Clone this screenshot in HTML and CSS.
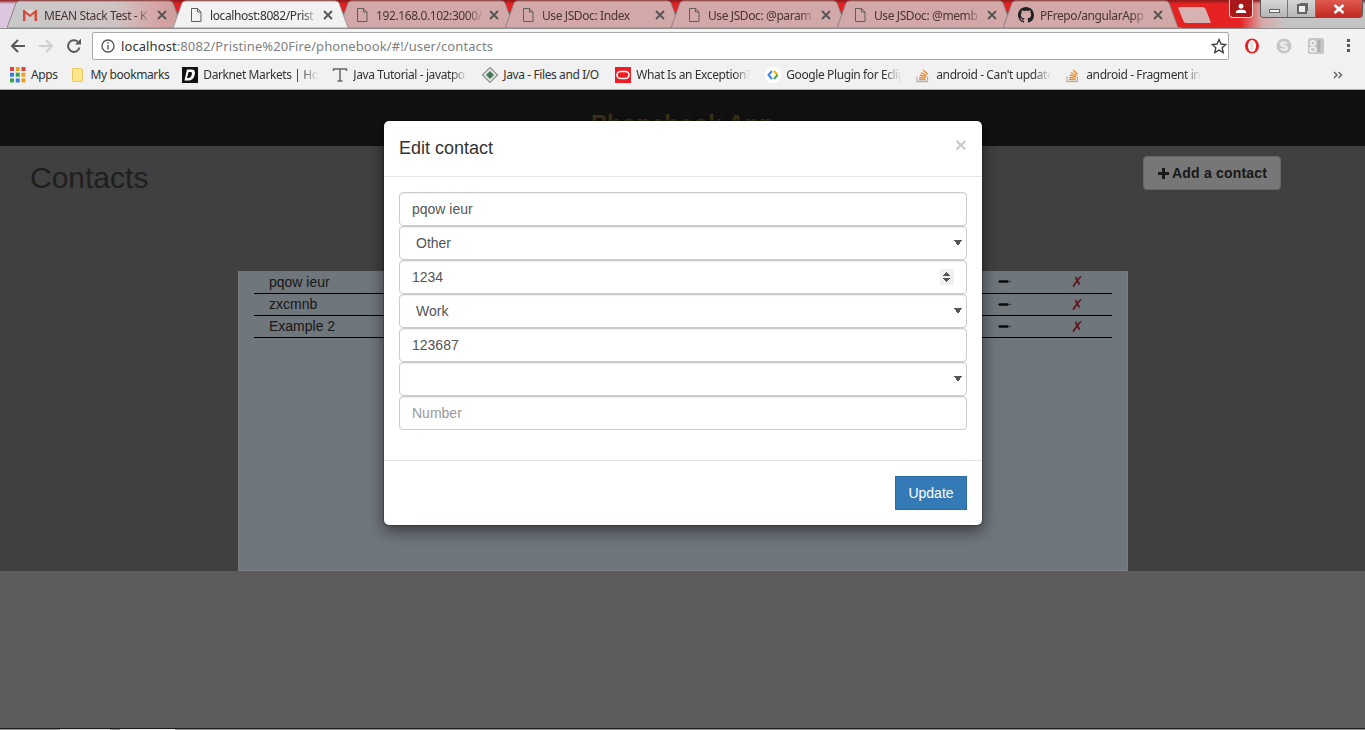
FILE: index.html
```html
<!DOCTYPE html>
<html lang="en">
<head>
  <meta charset="UTF-8">
  <title>Phonebook App</title>
  <link rel="stylesheet" href="styles.css">
</head>
<body>
  <svg class="sprite" width="0" height="0">
    <defs>
      <linearGradient id="first-tab-fill" x1="0" x2="1" y1="0" y2="0">
        <stop offset="0" stop-color="#c9c9c9"/>
        <stop offset=".6" stop-color="#cfc4c4"/>
        <stop offset=".85" stop-color="#d6a4a4"/>
        <stop offset="1" stop-color="#c99a9a"/>
      </linearGradient>
    </defs>
    <symbol id="tab-shape" viewBox="0 0 178 28" preserveAspectRatio="none">
      <path d="M0 28 L9 3 Q10 1 13 1 L162 1 Q165 1 166 3 L175 27.5 L178 28 Z"/>
    </symbol>
    <symbol id="page" viewBox="0 0 16 16">
      <path d="M3.500 1.500h6l3.500 3.500v9.500h-9.500z M9.500 1.500v3.500h3.500" fill="none" stroke="#5f5f5f" stroke-width="1"/>
    </symbol>
    <symbol id="close" viewBox="0 0 10 10">
      <path d="M1 1l8 8M9 1l-8 8" fill="none" stroke="#555" stroke-width="1.800"/>
    </symbol>
    <symbol id="so" viewBox="0 0 16 16">
      <path d="M2 9.500v5h10.500v-5" fill="none" stroke="#b9b3a9" stroke-width="1.300"/>
      <path d="M4 12.500h6.500" stroke="#c89a5a" stroke-width="1.400"/>
      <path d="M4.200 10.500l6.500 .6M4.800 8l6.300 1.700M6 5.500l5.600 3M8 3l4.600 4.300" fill="none" stroke="#f08a24" stroke-width="1.300"/>
    </symbol>
    <symbol id="pencil" viewBox="0 0 14 5">
      <path d="M0 2.500L1.500 1.200h8.500v2.600H1.500z" fill="#161616"/>
      <path d="M10 1.600L14 2.500l-4 .9z" fill="#6a6a6a"/>
    </symbol>
  </svg>

  <div class="tabstrip">
    <div class="tab tab-first">
      <svg class="tab-bg"><use href="#tab-shape"/></svg>
      <svg class="ico" viewBox="0 0 16 16"><path d="M1 3h14v11h-2.500V6.500L8 10 3.500 6.500V14H1z" fill="#d9d9d9"/><path d="M1 14V3h1.500L8 7.500 13.500 3H15v11h-2.500V6.500L8 10 3.500 6.500V14z" fill="#d5493c"/></svg>
      <span class="tab-label">MEAN Stack Test - K</span>
      <svg class="tab-x"><use href="#close"/></svg>
    </div>
    <div class="tab tab-active">
      <svg class="tab-bg"><use href="#tab-shape"/></svg>
      <svg class="ico"><use href="#page"/></svg>
      <span class="tab-label">localhost:8082/Prist</span>
      <svg class="tab-x"><use href="#close"/></svg>
    </div>
    <div class="tab">
      <svg class="tab-bg"><use href="#tab-shape"/></svg>
      <svg class="ico"><use href="#page"/></svg>
      <span class="tab-label">192.168.0.102:3000/</span>
      <svg class="tab-x"><use href="#close"/></svg>
    </div>
    <div class="tab">
      <svg class="tab-bg"><use href="#tab-shape"/></svg>
      <svg class="ico"><use href="#page"/></svg>
      <span class="tab-label">Use JSDoc: Index</span>
      <svg class="tab-x"><use href="#close"/></svg>
    </div>
    <div class="tab">
      <svg class="tab-bg"><use href="#tab-shape"/></svg>
      <svg class="ico"><use href="#page"/></svg>
      <span class="tab-label">Use JSDoc: @param</span>
      <svg class="tab-x"><use href="#close"/></svg>
    </div>
    <div class="tab">
      <svg class="tab-bg"><use href="#tab-shape"/></svg>
      <svg class="ico"><use href="#page"/></svg>
      <span class="tab-label">Use JSDoc: @memb</span>
      <svg class="tab-x"><use href="#close"/></svg>
    </div>
    <div class="tab">
      <svg class="tab-bg"><use href="#tab-shape"/></svg>
      <svg class="ico" viewBox="0 0 16 16"><path fill="#222" d="M8 0C3.580 0 0 3.580 0 8c0 3.540 2.290 6.530 5.470 7.590.4.070.55-.17.55-.38 0-.19-.01-.82-.01-1.490-2.010.37-2.530-.49-2.690-.94-.09-.23-.48-.94-.82-1.130-.28-.15-.68-.52-.01-.53.63-.01 1.080.58 1.230.82.72 1.210 1.870.87 2.330.66.070-.52.28-.87.51-1.070-1.780-.2-3.640-.89-3.640-3.950 0-.87.31-1.590.82-2.150-.08-.2-.36-1.020.08-2.120 0 0 .67-.21 2.200.82.64-.18 1.320-.27 2-.27s1.360.09 2 .27c1.530-1.040 2.200-.82 2.200-.82.44 1.100.16 1.920.08 2.120.51.56.82 1.270.82 2.150 0 3.070-1.870 3.750-3.650 3.950.29.25.54.73.54 1.480 0 1.070-.01 1.930-.01 2.200 0 .21.15.46.55.38A8.013 8.013 0 0 0 16 8c0-4.420-3.580-8-8-8z"/></svg>
      <span class="tab-label">PFrepo/angularApp</span>
      <svg class="tab-x"><use href="#close"/></svg>
    </div>
    <div class="newtab"></div>
    <div class="profile">
      <svg viewBox="0 0 16 12" width="14" height="11"><circle cx="8" cy="3.500" r="2.800" fill="#fff"/><path d="M2 11c0-3 3-3.500 6-3.500s6 .5 6 3.500z" fill="#fff"/></svg>
    </div>
    <div class="winbtns">
      <div class="winbtn win-first"><span class="win-min"></span></div>
      <div class="winbtn"><span class="win-max"></span></div>
      <div class="winbtn win-close">
        <svg viewBox="0 0 12 10" width="12" height="10"><path d="M1.500 1l9 8M10.500 1l-9 8" stroke="#fff" stroke-width="2.600" fill="none"/></svg>
      </div>
    </div>
  </div>

  <div class="toolbar">
    <svg class="navbtn" viewBox="0 0 16 16"><path d="M15 8H2.500M8 2L2 8l6 6" fill="none" stroke="#5a5a5a" stroke-width="2"/></svg>
    <svg class="navbtn" viewBox="0 0 16 16"><path d="M1 8h12.500M8 2l6 6-6 6" fill="none" stroke="#cfcfcf" stroke-width="2"/></svg>
    <svg class="navbtn" viewBox="0 0 16 16"><path d="M13.500 9.500A5.800 5.800 0 1 1 12 4" fill="none" stroke="#5a5a5a" stroke-width="2"/><path d="M9 6.500h6v-6z" fill="#5a5a5a"/></svg>
    <div class="omnibox">
      <svg class="info" viewBox="0 0 14 14"><circle cx="7" cy="7" r="6" fill="none" stroke="#555" stroke-width="1.300"/><path d="M7 6v4.500M7 3.300v1.500" stroke="#555" stroke-width="1.400"/></svg>
      <span class="url"><span class="url-host">localhost</span>:8082/Pristine%20Fire/phonebook/#!/user/contacts</span>
      <svg class="star" viewBox="0 0 16 16"><path d="M8 1.500l2 4.500 4.800.5-3.600 3.200 1 4.800L8 12.100l-4.200 2.400 1-4.800L1.200 6.500 6 6z" fill="none" stroke="#444" stroke-width="1.400"/></svg>
    </div>
    <div class="extensions">
      <svg class="ext" viewBox="0 0 16 16"><ellipse cx="8" cy="8" rx="7" ry="7.500" fill="#e8202a"/><ellipse cx="8" cy="8" rx="4" ry="6" fill="#fff"/><ellipse cx="8" cy="8" rx="1.800" ry="5" fill="#e3e3e3"/></svg>
      <svg class="ext" viewBox="0 0 16 16"><circle cx="8" cy="8" r="7.500" fill="#c6c6c6"/><path d="M11 5.500C10 4 5 3.800 5.200 6.300 5.400 8.500 11 7.500 11 10c0 2.200-5 2.200-6.200.4" fill="none" stroke="#f2f2f2" stroke-width="2"/></svg>
      <svg class="ext" viewBox="0 0 16 16"><rect x="0" y="0" width="16" height="16" rx="2" fill="#c6c6c6"/><circle cx="5" cy="5" r="2.300" fill="none" stroke="#f2f2f2" stroke-width="1.600"/><ellipse cx="5" cy="11.500" rx="3" ry="2.300" fill="none" stroke="#f2f2f2" stroke-width="1.600"/><path d="M11 2v12" stroke="#b0b0b0" stroke-width="3"/></svg>
      <span class="menu-dots"><i></i><i></i><i></i></span>
    </div>
  </div>

  <div class="bookmarks">
    <a class="bm bm-apps">
      <svg class="ico" viewBox="0 0 14 14">
        <rect x="0" y="0" width="3.500" height="3.500" fill="#e0403a"/><rect x="5" y="0" width="3.500" height="3.500" fill="#e8a020"/><rect x="10" y="0" width="3.500" height="3.500" fill="#e0403a"/>
        <rect x="0" y="5" width="3.500" height="3.500" fill="#3c7de0"/><rect x="5" y="5" width="3.500" height="3.500" fill="#38a050"/><rect x="10" y="5" width="3.500" height="3.500" fill="#e8a020"/>
        <rect x="0" y="10" width="3.500" height="3.500" fill="#38a050"/><rect x="5" y="10" width="3.500" height="3.500" fill="#3c7de0"/><rect x="10" y="10" width="3.500" height="3.500" fill="#e8a020"/>
      </svg>
      <span>Apps</span>
    </a>
    <a class="bm bm-folder">
      <svg class="ico" viewBox="0 0 16 16"><path d="M2.500 1.500h9l1 1v12h-10z" fill="#fde68c" stroke="#ecc860"/></svg>
      <span>My bookmarks</span>
    </a>
    <a class="bm">
      <svg class="ico" viewBox="0 0 16 16"><rect width="16" height="16" fill="#111"/><path d="M5 2.500h5c3 0 3.500 3 2.500 6-1 3.500-3 5-6 5H2.500z" fill="#fff"/><path d="M6.500 5h2.500c1 0 1.200 1.500.6 3-.5 1.600-1.500 3-3 3H5z" fill="#111"/></svg>
      <span class="bm-fade">Darknet Markets | Hov</span>
    </a>
    <a class="bm">
      <svg class="ico" viewBox="0 0 16 16"><path d="M1.500 4V2h13v2M8 2v12M5.500 14h5" fill="none" stroke="#666" stroke-width="1.500"/></svg>
      <span class="bm-fade">Java Tutorial - javatpo</span>
    </a>
    <a class="bm">
      <svg class="ico" viewBox="0 0 16 16"><path d="M8 .5L15.500 8 8 15.500.5 8z" fill="#dfe6df" stroke="#555"/><path d="M8 4l4 4-4 4-4-4z" fill="#4a7a55"/></svg>
      <span class="bm-full">Java - Files and I/O</span>
    </a>
    <a class="bm">
      <svg class="ico" viewBox="0 0 16 16"><rect width="16" height="16" fill="#ee1c25"/><rect x="2" y="4.500" width="12" height="7" rx="3.500" fill="none" stroke="#fff" stroke-width="1.600"/></svg>
      <span class="bm-fade">What Is an Exception?</span>
    </a>
    <a class="bm">
      <svg class="ico" viewBox="0 0 16 16"><circle cx="8" cy="8" r="8" fill="#fff"/><path d="M7 4L3.500 8 7 12" fill="none" stroke="#4285f4" stroke-width="2"/><path d="M9 4l3.500 4" fill="none" stroke="#f4b400" stroke-width="2"/><path d="M12.500 8L9 12" fill="none" stroke="#34a853" stroke-width="2"/></svg>
      <span class="bm-fade">Google Plugin for Eclip</span>
    </a>
    <a class="bm">
      <svg class="ico"><use href="#so"/></svg>
      <span class="bm-fade">android - Can't update</span>
    </a>
    <a class="bm">
      <svg class="ico"><use href="#so"/></svg>
      <span class="bm-fade">android - Fragment in</span>
    </a>
    <svg class="chevrons" viewBox="0 0 10 8"><path d="M1 1l3 3-3 3M5.500 1l3 3-3 3" fill="none" stroke="#666" stroke-width="1.500"/></svg>
  </div>

  <div class="app">
    <header class="app-header">
      <h2 class="app-title">Phonebook App</h2>
    </header>

    <main class="contacts">
      <div class="contacts-head">
        <h1 class="contacts-title">Contacts</h1>
        <button class="btn-add"><span class="plus"></span>Add a contact</button>
      </div>
      <div class="panel">
        <table class="contact-table">
          <tbody>
            <tr><td>pqow ieur</td><td class="col-edit"><svg class="pencil"><use href="#pencil"/></svg></td><td class="col-del">✗</td></tr>
            <tr><td>zxcmnb</td><td class="col-edit"><svg class="pencil"><use href="#pencil"/></svg></td><td class="col-del">✗</td></tr>
            <tr><td>Example 2</td><td class="col-edit"><svg class="pencil"><use href="#pencil"/></svg></td><td class="col-del">✗</td></tr>
          </tbody>
        </table>
      </div>
    </main>

    <div class="backdrop">
      <div class="modal">
        <div class="modal-header">
          <span class="modal-close">×</span>
          <h4 class="modal-title">Edit contact</h4>
        </div>
        <form class="modal-body">
          <input class="form-control" type="text" value="pqow ieur">
          <select class="form-control form-select">
            <option>Other</option>
          </select>
          <input class="form-control num" type="number" value="1234">
          <select class="form-control form-select">
            <option>Work</option>
          </select>
          <input class="form-control" type="text" value="123687">
          <select class="form-control form-select">
            <option></option>
          </select>
          <input class="form-control" type="text" placeholder="Number">
        </form>
        <div class="modal-footer">
          <button class="btn-update">Update</button>
        </div>
      </div>
    </div>
  </div>

  <div class="taskbar"></div>
</body>
</html>
```

FILE: styles.css
```css
* {
  box-sizing: border-box;
}

html, body {
  margin: 0;
  height: 730px;
  overflow: hidden;
}

body {
  display: flex;
  flex-direction: column;
  font-family: "Liberation Sans", Arial, sans-serif;
  font-size: 14px;
  color: #333;
}

.sprite {
  position: absolute;
}

/* browser chrome */
.tabstrip {
  display: flex;
  flex: none;
  height: 29px;
  padding: 0 2px 0 7px;
  font-family: "Noto Sans", sans-serif;
  font-size: 12px;
  letter-spacing: -.4px;
  background:
    linear-gradient(to bottom, #8f1a1a 0, rgba(143, 26, 26, 0) 4px),
    linear-gradient(to right, #dcc8de 0, #dcc8de 14px, #e02020 30px, #e62222 1240px, #d8a8a8 1262px, #c4c4c4 1285px);
  border-bottom: 1px solid #8e8e8e;
}

.tab {
  position: relative;
  display: flex;
  align-items: center;
  flex: none;
  width: 178px;
  height: 28px;
  margin-right: -12px;
  padding: 2px 0 0 15px;
  color: #4a3434;
}

.tab-bg {
  position: absolute;
  left: 0;
  top: 0;
  width: 100%;
  height: 100%;
  fill: #d2a8a8;
  stroke: #8f8383;
  stroke-width: 1px;
}

.tab-first .tab-bg {
  fill: url(#first-tab-fill);
}

.tab-active {
  z-index: 2;
  color: #333;
}

.tab-active .tab-bg {
  fill: #f2f2f2;
  stroke: #999;
}

.ico {
  position: relative;
  flex: none;
  width: 16px;
  height: 16px;
}

.tab-label {
  position: relative;
  flex: none;
  width: 108px;
  margin-left: 6px;
  white-space: nowrap;
  -webkit-mask-image: linear-gradient(to right, #000 85%, transparent);
  mask-image: linear-gradient(to right, #000 85%, transparent);
}

.tab-x {
  position: relative;
  flex: none;
  width: 10px;
  height: 10px;
  margin-left: 5px;
}

.newtab {
  flex: none;
  width: 27px;
  height: 16px;
  margin: 7px 0 0 12px;
  background: #d8b2b2;
  transform: skewX(22deg);
  border-radius: 2px;
}

.profile {
  display: flex;
  align-items: center;
  justify-content: center;
  flex: none;
  width: 24px;
  height: 18px;
  margin-left: auto;
  background: #a81818;
  border: 1px solid #f2d8d8;
  border-top: 0;
  border-radius: 0 0 4px 4px;
}

.winbtns {
  display: flex;
  flex: none;
  height: 18px;
  margin-left: 7px;
  border: 1px solid #5c5c5c;
  border-top: 0;
  border-radius: 0 0 4px 4px;
  overflow: hidden;
}

.winbtn {
  display: flex;
  align-items: center;
  justify-content: center;
  width: 28px;
  background: linear-gradient(to bottom, #d6d6d6, #b6b6b6);
  border-right: 1px solid #777;
}

.win-first {
  width: 27px;
}

.win-close {
  width: 46px;
  border-right: 0;
  background: linear-gradient(to bottom, #e05a50, #c02820);
}

.win-min {
  display: block;
  width: 11px;
  height: 4px;
  margin-top: 5px;
  background: #f2f2f2;
  border: 1px solid #666;
}

.win-max {
  display: block;
  width: 10px;
  height: 10px;
  background: #eee;
  border: 2px solid #666;
  box-shadow: 2px -2px 0 -1px #666;
}

.toolbar {
  display: flex;
  align-items: center;
  flex: none;
  height: 33px;
  padding-left: 10px;
  background: #f2f2f2;
}

.navbtn {
  flex: none;
  width: 16px;
  height: 16px;
  margin-right: 12px;
}

.omnibox {
  display: flex;
  align-items: center;
  flex: none;
  width: 1137px;
  height: 28px;
  margin-left: -2px;
  padding: 0 1px 0 8px;
  background: #fff;
  border: 1px solid #aaa;
  border-radius: 2px;
}

.info {
  flex: none;
  width: 14px;
  height: 14px;
}

.url {
  flex: 1;
  margin-left: 6px;
  font-family: "Noto Sans", sans-serif;
  font-size: 13px;
  letter-spacing: .09px;
  color: #808080;
  white-space: nowrap;
}

.url-host {
  color: #333;
}

.star {
  flex: none;
  width: 16px;
  height: 16px;
}

.extensions {
  display: flex;
  align-items: center;
  flex: 1;
  padding-left: 15px;
}

.ext {
  flex: none;
  width: 16px;
  height: 16px;
  margin-right: 16px;
}

.menu-dots {
  display: flex;
  flex-direction: column;
  gap: 2px;
  margin-left: 7px;
}

.menu-dots i {
  display: block;
  width: 3px;
  height: 3px;
  background: #5a5a5a;
}

.bookmarks {
  display: flex;
  align-items: center;
  flex: none;
  height: 28px;
  padding: 0 22px 2px 10px;
  font-family: "Noto Sans", sans-serif;
  font-size: 12px;
  letter-spacing: -.4px;
  color: #333;
  background: #f1f1f1;
  border-bottom: 1px solid #a9a9a9;
}

.bm {
  display: flex;
  align-items: center;
  flex: none;
  gap: 5px;
  margin-right: 14px;
  white-space: nowrap;
}

.bm-apps {
  margin-right: 12px;
}

.bm-folder {
  margin-right: 13px;
}

.bm-fade {
  width: 115px;
  -webkit-mask-image: linear-gradient(to right, #000 85%, transparent);
  mask-image: linear-gradient(to right, #000 85%, transparent);
}

.bm-full {
  width: 98px;
}

.chevrons {
  flex: none;
  width: 10px;
  height: 8px;
  margin-left: auto;
}

/* the app under the modal */
.app {
  position: relative;
  display: flex;
  flex-direction: column;
  flex: 1;
  background: #b8b8b8;
}

.app-header {
  display: flex;
  align-items: center;
  justify-content: center;
  flex: none;
  height: 56px;
  padding-top: 12px;
  background: #222;
}

.app-title {
  margin: 0;
  font-size: 24px;
  font-weight: bold;
  color: #80622f;
}

.contacts {
  display: flex;
  flex-direction: column;
  flex: none;
  height: 425px;
  background: #808080;
}

.contacts-head {
  display: flex;
  align-items: flex-start;
  justify-content: space-between;
  flex: none;
  height: 125px;
  padding: 10px 84px 0 30px;
}

.contacts-title {
  margin: 5px 0 0;
  font-size: 30px;
  font-weight: normal;
  line-height: 34px;
  color: #3f3f3f;
}

.btn-add {
  display: flex;
  align-items: center;
  width: 138px;
  height: 34px;
  padding: 0 0 0 14px;
  font-family: "Liberation Sans", Arial, sans-serif;
  font-size: 14px;
  font-weight: bold;
  letter-spacing: .2px;
  color: #333;
  background: #eee;
  border: 1px solid #ccc;
  border-radius: 4px;
}

.plus {
  display: block;
  width: 11px;
  height: 11px;
  margin-right: 3px;
  background:
    linear-gradient(#333, #333) center / 100% 3px no-repeat,
    linear-gradient(#333, #333) center / 3px 100% no-repeat;
}

.panel {
  flex: 1;
  width: 890px;
  margin-left: 238px;
  padding: 0 15px;
  background: #dfedf8;
  border: 1px solid #fff;
  border-top: 0;
}

.contact-table {
  width: 100%;
  border-collapse: collapse;
}

.contact-table td {
  height: 22px;
  padding: 0 0 0 15px;
  border-bottom: 1px solid #000;
}

.col-edit {
  width: 74px;
}

.pencil {
  display: block;
  width: 14px;
  height: 5px;
}

.contact-table .col-del {
  width: 55px;
  padding: 1px 0 0 14px;
  font-family: "DejaVu Sans", sans-serif;
  font-size: 15px;
  line-height: 18px;
  color: #bb343c;
}

/* modal */
.backdrop {
  position: absolute;
  inset: 0;
  background: rgba(0, 0, 0, .5);
}

.modal {
  width: 600px;
  margin: 30px 0 0 383px;
  background: #fff;
  border: 1px solid rgba(0, 0, 0, .2);
  background-clip: padding-box;
  border-radius: 6px;
  box-shadow: 0 5px 15px rgba(0, 0, 0, .5);
}

.modal-header {
  height: 56px;
  padding: 15px;
  border-bottom: 1px solid #e5e5e5;
}

.modal-close {
  float: right;
  margin-top: -2px;
  font-size: 21px;
  font-weight: bold;
  line-height: 1;
  color: #000;
  opacity: .2;
}

.modal-title {
  margin: 0;
  font-size: 18px;
  font-weight: normal;
  line-height: 25px;
}

.modal-body {
  display: flex;
  flex-direction: column;
  padding: 15px 15px 30px;
}

.form-control {
  display: block;
  width: 100%;
  height: 34px;
  padding: 6px 12px;
  font-family: "Liberation Sans", Arial, sans-serif;
  font-size: 14px;
  color: #555;
  background-color: #fff;
  border: 1px solid #ccc;
  border-radius: 4px;
  box-shadow: inset 0 1px 1px rgba(0, 0, 0, .075);
}

.form-select {
  padding-left: 16px;
  -webkit-appearance: none;
  appearance: none;
  background-image:
    linear-gradient(to top right, transparent 50%, #555 50%),
    linear-gradient(to top left, transparent 50%, #555 50%);
  background-repeat: no-repeat;
  background-size: 4px 6px;
  background-position: right 8px center, right 4px center;
}

.form-control::placeholder {
  color: #999;
}

.num::-webkit-inner-spin-button {
  -webkit-appearance: none;
  width: 14px;
  height: 16px;
  margin: 0;
  opacity: 1;
  background-color: #f0f0f0;
  background-image:
    linear-gradient(to bottom right, transparent 50%, #555 50%),
    linear-gradient(to bottom left, transparent 50%, #555 50%),
    linear-gradient(to top right, transparent 50%, #555 50%),
    linear-gradient(to top left, transparent 50%, #555 50%);
  background-repeat: no-repeat;
  background-size: 4px 4px;
  background-position: 3px 3px, 7px 3px, 3px 9px, 7px 9px;
}

.modal-footer {
  display: flex;
  justify-content: flex-end;
  padding: 15px;
  border-top: 1px solid #e5e5e5;
}

.btn-update {
  width: 72px;
  height: 34px;
  padding: 0;
  font-family: "Liberation Sans", Arial, sans-serif;
  font-size: 14px;
  color: #fff;
  background: #337ab7;
  border: 1px solid #2e6da4;
}

.taskbar {
  flex: none;
  height: 2px;
  background: linear-gradient(to right, #999 60px, #ddd 60px, #ddd 110px, #999 110px, #999 120px, #eee 120px, #eee 175px, #999 175px);
  border-top: 1px solid #1c1c1c;
}
```
